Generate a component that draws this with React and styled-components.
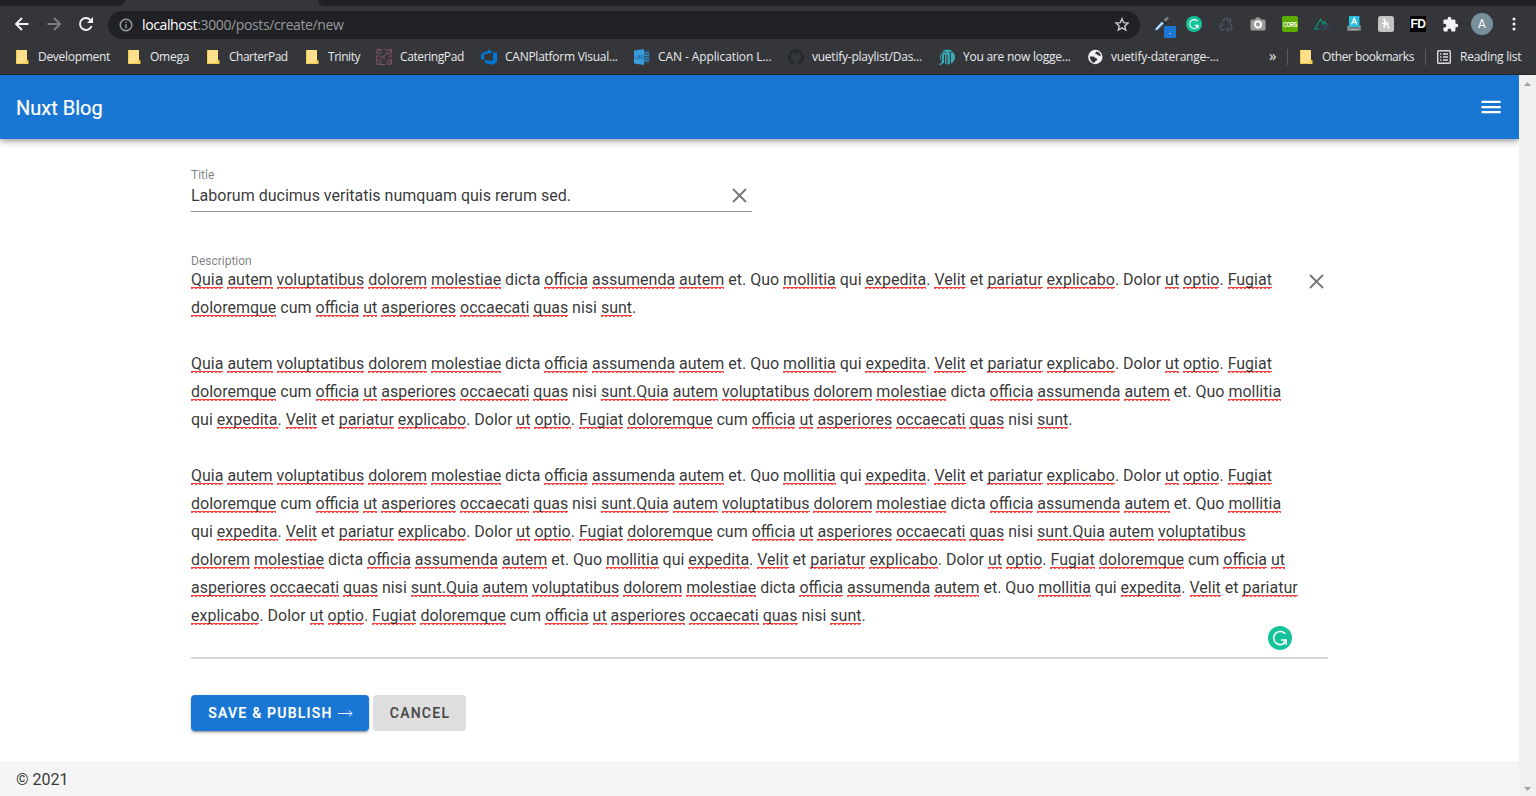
import React from "react";
import styled, { createGlobalStyle } from "styled-components";

const GlobalStyle = createGlobalStyle`
  * { box-sizing: border-box; }
  html, body { margin: 0; height: 100%; overflow: hidden; background: #fff; }
  body { font-family: Roboto, "Liberation Sans", sans-serif; color: rgba(0, 0, 0, 0.8); }
  svg { display: block; flex: none; }
`;

const Window = styled.div`
  width: 1536px;
  height: 796px;
  display: flex;
  flex-direction: column;
`;

const Chrome = styled.header`
  height: 75px;
  flex: none;
  background: #35363a;
  border-bottom: 1px solid #28292c;
  font-family: "Open Sans", "Noto Sans", sans-serif;
  color: #e8eaed;
`;

const TabStrip = styled.div`
  height: 6px;
  display: flex;
  justify-content: space-between;
`;

const InactiveTabs = styled.div`
  width: ${(p) => p.$width}px;
  background: #202124;
  border-radius: ${(p) => (p.$side === "left" ? "0 0 7px 0" : "0 0 0 7px")};
`;

const Toolbar = styled.div`
  height: 36px;
  display: flex;
  align-items: center;
  padding-left: 6px;
`;

const ToolButton = styled.div`
  width: 32px;
  height: 32px;
  flex: none;
  display: flex;
  align-items: center;
  justify-content: center;
  position: relative;
`;

const AddressBar = styled.div`
  width: 1032px;
  height: 28px;
  margin: 1px 6px 0 6px;
  border-radius: 14px;
  background: #202124;
  display: flex;
  align-items: center;
  padding: 0 10px 0 11px;
`;

const Url = styled.div`
  flex: 1;
  margin-left: 9px;
  font-size: 14px;
  letter-spacing: -0.38px;
  color: #96999d;
  white-space: nowrap;
  span { color: #fff; }
`;

const PenBadge = styled.div`
  position: absolute;
  left: 18px;
  top: 18px;
  width: 12px;
  height: 12px;
  border-radius: 1px;
  background: #1976d2;
  color: #fff;
  font-size: 9px;
  line-height: 9px;
  text-align: center;
`;

const Tile = styled.div`
  width: 16px;
  height: 16px;
  border-radius: ${(p) => p.$radius ?? 2}px;
  background: ${(p) => p.$bg};
  color: #fff;
  font: ${(p) => p.$font};
  letter-spacing: ${(p) => p.$spacing ?? 0}px;
  display: flex;
  align-items: center;
  justify-content: center;
  span { transform: scaleY(${(p) => p.$stretch ?? 1}); }
`;

const Avatar = styled.div`
  width: 22px;
  height: 22px;
  border-radius: 50%;
  background: #78909c;
  color: #fff;
  font: 12px/22px Roboto, sans-serif;
  text-align: center;
`;

const Bookmarks = styled.nav`
  height: 30px;
  display: flex;
  align-items: center;
  padding: 0 0 1px 14px;
  font-size: 12px;
  white-space: nowrap;
`;

const Bookmark = styled.div`
  width: ${(p) => p.$width}px;
  flex: none;
  display: flex;
  align-items: center;
  gap: 8px;
  letter-spacing: ${(p) => p.$spacing ?? 0}px;
`;

const Chevrons = styled.div`
  width: 18px;
  font-size: 15px;
  line-height: 12px;
  padding-bottom: 3px;
`;

const Divider = styled.div`
  width: 1px;
  height: 16px;
  margin-right: ${(p) => p.$gap}px;
  background: #5b5c60;
`;

const Viewport = styled.div`
  flex: 1;
  display: flex;
  min-height: 0;
`;

const Page = styled.div`
  width: 1519px;
  display: flex;
  flex-direction: column;
`;

const AppBar = styled.div`
  height: 64px;
  flex: none;
  background: #1976d2;
  color: #fff;
  display: flex;
  align-items: center;
  justify-content: space-between;
  padding: 0 16px;
  font-size: 20px;
  box-shadow: 0 2px 4px -1px rgba(0, 0, 0, 0.2), 0 4px 5px 0 rgba(0, 0, 0, 0.14), 0 1px 10px 0 rgba(0, 0, 0, 0.12);
`;

const Brand = styled.div`
  padding-top: 1px;
  -webkit-text-stroke: 0.2px #fff;
`;

const Form = styled.main`
  flex: 1;
  padding: 29px 191px 0 191px;
`;

const Label = styled.div`
  height: 14px;
  font-size: 12px;
  line-height: 14px;
  color: rgba(0, 0, 0, 0.52);
`;

const TitleField = styled.div`
  width: 561px;
  height: 44px;
  border-bottom: 1px solid #949494;
`;

const TitleRow = styled.div`
  height: 26px;
  display: flex;
  align-items: center;
  justify-content: space-between;
  padding-right: 5px;
  font-size: 16px;
`;

const DescriptionField = styled.div`
  position: relative;
  margin-top: 42px;
  height: 405px;
  border-bottom: 2px solid #d6d6d6;
`;

const DescriptionRow = styled.div`
  display: flex;
  justify-content: space-between;
  padding-right: 4px;
`;

const Paragraphs = styled.div`
  margin-top: -2px;
  font-size: 16px;
  line-height: 28px;
  word-spacing: -0.03px;
`;

const Line = styled.div`
  height: 28px;
  white-space: nowrap;
`;

const Misspelled = styled.span`
  background:
    linear-gradient(#f4433e, #f4433e) 0 17px / 100% 1px no-repeat,
    repeating-linear-gradient(90deg, rgba(255, 40, 40, 0.8) 0 2px, rgba(255, 40, 40, 0.1) 2px 4px) 0 18px / 100% 1px no-repeat;
`;

const Clear = styled.div`
  padding-top: ${(p) => p.$top ?? 0}px;
`;

const GrammarBadge = styled.div`
  position: absolute;
  right: 36px;
  bottom: 7px;
`;

const Actions = styled.div`
  display: flex;
  gap: 4px;
  margin-top: 36px;
`;

const Button = styled.button`
  width: ${(p) => p.$width}px;
  height: 36px;
  padding: 0 0 0 1px;
  border: 0;
  border-radius: 4px;
  background: ${(p) => (p.$primary ? "#1976d2" : "#dedede")};
  color: ${(p) => (p.$primary ? "#fff" : "rgba(0, 0, 0, 0.67)")};
  box-shadow: ${(p) => (p.$primary ? "0 3px 1px -2px rgba(0,0,0,.2), 0 2px 2px 0 rgba(0,0,0,.14), 0 1px 5px 0 rgba(0,0,0,.12)" : "none")};
  font: 500 14px Roboto, sans-serif;
  letter-spacing: 1.25px;
  -webkit-text-stroke: 0.2px currentColor;
  display: flex;
  align-items: center;
  justify-content: center;
  gap: 5px;
`;

const Footer = styled.footer`
  height: 35px;
  flex: none;
  background: #f5f5f5;
  padding: 7px 16px 0;
  font-size: 16px;
  line-height: 24px;
`;

const Scrollbar = styled.div`
  width: 17px;
  background: #f1f1f1;
  display: flex;
  flex-direction: column;
  align-items: center;
  justify-content: space-between;
  padding: 7px 0 5px;
`;

const Folder = () => (
  <svg width="16" height="16" viewBox="0 0 16 16">
    <path d="M2 1h11v10l1.300 1v3H2z" fill="#ffe08a" />
    <path d="M2.500 1v13.500h9" stroke="#f3c84f" fill="none" />
    <path d="M11.800 14.600v-3.200l1-1 1.600 1.200v3z" fill="#f3c645" />
  </svg>
);

const Circuit = () => (
  <svg width="16" height="16" viewBox="0 0 16 16" fill="none" stroke="#8a5464" strokeWidth=".9">
    <rect x=".5" y=".5" width="15" height="15" strokeDasharray="6 2 2 2" />
    <circle cx="3" cy="3" r="2" /><circle cx="13" cy="3" r="2" />
    <circle cx="3" cy="13" r="2" /><circle cx="13" cy="13" r="2" />
    <path d="M5 11V8l3-1 3-3M8 7v4M1 7h3M12 8h3" />
  </svg>
);

const DevOps = () => (
  <svg width="16" height="16" viewBox="0 0 16 16" fill="#0078d7">
    <path d="M0 6 1.500 4.100 7 1.900V0l5 3.600-9 1.800v5.500L0 10zM16 3.200v9.500l-4 3.300-6-2v2L3 11l9 1.100V3.600z" />
  </svg>
);

const ServerLog = () => (
  <svg width="16" height="16" viewBox="0 0 16 16">
    <path d="M9 1.500h6.500v12.500H9z" fill="#2b5877" />
    <path d="M10 4h5M10 6.500h5M10 9h5M10 11.500h5" stroke="#3f9bd6" strokeWidth=".8" />
    <path d="M0 1.500 10 0v16L0 14.500z" fill="#3a9bdc" />
    <path d="M1 6.500v3h1.600M4 6.500h1.500v3H4zM9 6.500H7v3h2V8" fill="none" stroke="#236a9c" strokeWidth=".8" />
  </svg>
);

const GitHub = () => (
  <svg width="16" height="16" viewBox="0 0 16 16" fill="#24292e">
    <path d="M8 0C3.580 0 0 3.580 0 8c0 3.540 2.290 6.530 5.470 7.590.4.070.550-.170.550-.380 0-.190-.010-.820-.010-1.490-2.010.370-2.530-.490-2.690-.940-.090-.230-.480-.940-.820-1.130-.280-.150-.680-.520-.010-.530.630-.010 1.080.580 1.230.820.720 1.210 1.870.870 2.330.660.070-.520.280-.870.510-1.070-1.780-.2-3.640-.890-3.640-3.950 0-.870.310-1.590.820-2.150-.080-.2-.360-1.020.080-2.120 0 0 .670-.210 2.200.820A7.700 7.700 0 0 1 8 3.860c.680 0 1.360.090 2 .270 1.530-1.040 2.200-.820 2.200-.820.440 1.100.160 1.920.080 2.120.510.560.820 1.270.820 2.150 0 3.070-1.870 3.750-3.650 3.950.290.250.540.730.540 1.480 0 1.070-.010 1.930-.010 2.200 0 .210.150.460.550.380A8 8 0 0 0 16 8c0-4.420-3.580-8-8-8z" />
  </svg>
);

const TealLogo = () => (
  <svg width="16" height="16" viewBox="0 0 16 16">
    <circle cx="8.500" cy="8" r="7.500" fill="#39aeb8" />
    <path d="M2.800 3.500V12M5.500 5.500V16M8 5.500V16M11.300 3.800V15" stroke="#35363a" strokeWidth="1.100" />
    <path d="M3 3.200h5M9.500 3.200H15" stroke="#35363a" strokeWidth=".7" />
    <path d="M4.200 5v8L.8 15.800" fill="none" stroke="#39aeb8" strokeWidth="1.500" />
  </svg>
);

const Globe = () => (
  <svg width="16" height="16" viewBox="0 0 16 16">
    <circle cx="8.300" cy="8" r="7.200" fill="#f1f3f4" />
    <path d="M2.800 7.500h3.400c1.600 0 1.800 1.900 3.400 1.900.9 0 1 .9.500 1.700-.6 1-1.300.6-2 1.300-.5.500-.2 1.200-1 1.300C5 13.500 3 11 2.800 7.500zM9.500 2.500 8.400 4c-.4.700.3 1.500 1.200 1.300.8-.2.800 1.200 1.800 1.200 1.300 0 1.400.8 2.500.8-.3-2.500-2-4.500-4.400-4.800z" fill="#35363a" />
  </svg>
);

const ReadingList = () => (
  <svg width="16" height="16" viewBox="0 0 16 16" fill="none" stroke="#dadce0">
    <rect x="1.700" y="1.700" width="12.600" height="12.600" rx="1" strokeWidth="1.400" />
    <path d="M4 5h1.500M4 8h1.500M4 11h1.500M7 5h5M7 8h5M7 11h5" strokeWidth="1.300" />
  </svg>
);

const Grammar = ({ size }) => (
  <svg width={size} height={size} viewBox="0 0 24 24" fill="none">
    <circle cx="12" cy="12" r="12" fill="#15c39a" />
    <path d="M17.300 7.800A6.600 6.600 0 1 0 16.800 16.800" stroke="#fff" strokeWidth="1.600" />
    <path d="M13.200 14h5v4.800M18 14.200l-2.800 2.800" stroke="#fff" strokeWidth="1.600" />
  </svg>
);

const Cross = () => (
  <svg width="15" height="15" viewBox="0 0 15 15" stroke="#757575" strokeWidth="1.800">
    <path d="M1 1l13 13M14 1 1 14" />
  </svg>
);

const BOOKMARKS = [
  ["Development", Folder, 112, -0.3],
  ["Omega", Folder, 79, -0.25],
  ["CharterPad", Folder, 99, -0.5],
  ["Trinity", Folder, 72, -0.45],
  ["CateringPad", Circuit, 105, -0.4],
  ["CANPlatform Visual...", DevOps, 153, -0.26],
  ["CAN - Application L...", ServerLog, 154, -0.1],
  ["vuetify-playlist/Das...", GitHub, 151, -0.24],
  ["You are now logge...", TealLogo, 148, -0.24],
  ["vuetify-daterange-...", Globe, 182, -0.2],
];

const P = "Quia autem voluptatibus dolorem molestiae dicta officia assumenda autem et. Quo mollitia qui expedita. Velit et pariatur explicabo. Dolor ut optio. Fugiat";
const LINES = [
  P,
  "doloremque cum officia ut asperiores occaecati quas nisi sunt.",
  "",
  P,
  "doloremque cum officia ut asperiores occaecati quas nisi sunt.Quia autem voluptatibus dolorem molestiae dicta officia assumenda autem et. Quo mollitia",
  "qui expedita. Velit et pariatur explicabo. Dolor ut optio. Fugiat doloremque cum officia ut asperiores occaecati quas nisi sunt.",
  "",
  P,
  "doloremque cum officia ut asperiores occaecati quas nisi sunt.Quia autem voluptatibus dolorem molestiae dicta officia assumenda autem et. Quo mollitia",
  "qui expedita. Velit et pariatur explicabo. Dolor ut optio. Fugiat doloremque cum officia ut asperiores occaecati quas nisi sunt.Quia autem voluptatibus",
  "dolorem molestiae dicta officia assumenda autem et. Quo mollitia qui expedita. Velit et pariatur explicabo. Dolor ut optio. Fugiat doloremque cum officia ut",
  "asperiores occaecati quas nisi sunt.Quia autem voluptatibus dolorem molestiae dicta officia assumenda autem et. Quo mollitia qui expedita. Velit et pariatur",
  "explicabo. Dolor ut optio. Fugiat doloremque cum officia ut asperiores occaecati quas nisi sunt.",
];

const KNOWN = new Set(["dicta", "et", "Quo", "qui", "Dolor", "cum", "nisi"]);

const checkSpelling = (line) =>
  line.split(/([A-Za-z]+(?:\.[A-Za-z]+)?)/).map((part, i) =>
    i % 2 === 1 && !KNOWN.has(part) ? <Misspelled key={i}>{part}</Misspelled> : part
  );

export default function App() {
  return (
    <Window>
      <GlobalStyle />
      <Chrome>
        <TabStrip>
          <InactiveTabs $width={125} $side="left" />
          <InactiveTabs $width={1218} $side="right" />
        </TabStrip>
        <Toolbar>
          <ToolButton>
            <svg width="16" height="16" viewBox="0 0 16 16" fill="none" stroke="#f1f3f4" strokeWidth="1.900"><path d="M14.500 8H2.500M8 2 2 8l6 6" /></svg>
          </ToolButton>
          <ToolButton>
            <svg width="16" height="16" viewBox="0 0 16 16" fill="none" stroke="#7d7e82" strokeWidth="1.900"><path d="M1.500 8h12M8 2l6 6-6 6" /></svg>
          </ToolButton>
          <ToolButton>
            <svg width="16" height="16" viewBox="0 0 16 16" fill="none" stroke="#f1f3f4" strokeWidth="1.900"><path d="M13.600 10A6 6 0 1 1 12.300 3.800L13.500 5" /><path d="M15 1v6H9z" fill="#f1f3f4" stroke="none" /></svg>
          </ToolButton>
          <AddressBar>
            <svg width="14" height="14" viewBox="0 0 14 14" fill="none" stroke="#9aa0a6" strokeWidth="1.400"><circle cx="7" cy="7" r="5.800" /><path d="M7 6.200V10.200M7 3.700v1.400" /></svg>
            <Url><span>localhost</span>:3000/posts/create/new</Url>
            <svg width="16" height="16" viewBox="0 0 16 16" fill="none" stroke="#c8cacd" strokeWidth="1.400"><path d="M8 1.700 9.700 5.700l4.300.4-3.200 2.800.9 4.200L8 10.900l-3.700 2.200.9-4.200L2 6.100l4.300-.4z" /></svg>
          </AddressBar>
          <ToolButton>
            <svg width="16" height="16" viewBox="0 0 16 16"><path d="M1 15 2 12 8 5.500l2.500 2L4 13.800z" fill="#4a9be0" /><path d="M2 13.500 8.500 6.500" stroke="#e3edf7" strokeWidth="1.500" /><path d="m9.500 6 4.500-4.500" stroke="#77787b" strokeWidth="3" /><path d="M8 4l4 3.500" stroke="#222" strokeWidth="1.500" /></svg>
            <PenBadge>.</PenBadge>
          </ToolButton>
          <ToolButton><Grammar size={16} /></ToolButton>
          <ToolButton>
            <svg width="16" height="16" viewBox="0 0 16 16" fill="none" stroke="#4c535e" strokeWidth="1.700"><path d="M5 5.500 7 2h2l1.500 2.500M12 7l2.500 4.500-1 2H9.500M6.500 13.500h-4l-1-2L3.500 8" strokeDasharray="4 1.200" /><path d="M12.500 2.500V5.500H9.500M11 11.500l-2 2 2 2M1.500 8.300l2.500-.8.800 2.500" /></svg>
          </ToolButton>
          <ToolButton>
            <svg width="16" height="16" viewBox="0 0 16 16"><path d="M2 3.500h3l1-2h4l1 2h3A1.500 1.500 0 0 1 15.500 5v8a1.500 1.500 0 0 1-1.500 1.500H2A1.500 1.500 0 0 1 .5 13V5A1.500 1.500 0 0 1 2 3.500z" fill="#9b9b9b" /><circle cx="8" cy="8.500" r="3.100" fill="none" stroke="#fff" strokeWidth="1.900" /></svg>
          </ToolButton>
          <ToolButton><Tile $bg="#5cab00" $font='700 5.500px "Liberation Sans", sans-serif' $spacing={-0.5} $stretch={1.35}><span>CORS</span></Tile></ToolButton>
          <ToolButton>
            <svg width="16" height="16" viewBox="0 0 16 16" fill="none" strokeWidth="1.200"><path d="m5.500 13 5-7.500 4.500 7.500z" stroke="#2f495e" /><path d="M6.500 3.500 11.500 13" stroke="#2b6070" /><path d="M5 13H.8L6.500 3.200 9 7.500l1.500-2L13 9" stroke="#079c75" /></svg>
          </ToolButton>
          <ToolButton>
            <svg width="16" height="16" viewBox="0 0 16 16"><path d="M1 9.500h14V15H1z" fill="#737679" /><path d="M2 12h1.500M12.500 12H14M4 13.500h8" stroke="#b8babc" /><path d="M3 0h10.500v11H3z" fill="#26bfe0" /><path d="M5.500 8.500 8.200 2l2.700 6.500M6.500 6.400h3.400" fill="none" stroke="#fff" strokeWidth="1.200" /></svg>
          </ToolButton>
          <ToolButton>
            <svg width="16" height="16" viewBox="0 0 16 16"><rect width="16" height="16" rx="2.500" fill="#c3c3c3" /><path d="M6 12.500c.3-3.500.8-6 .8-8.500 0-1-1-1-1.800-.2M4 7.600c2.500-.4 4.500-1 6.500-1M6.500 9.500C8.500 7.300 10.300 7.500 9.800 9.500c-.4 1.700-.2 3 1.800 1.800" fill="none" stroke="#fff" strokeWidth="1.300" /></svg>
          </ToolButton>
          <ToolButton><Tile $bg="#000" $radius={0} $font='700 12px "Liberation Sans", sans-serif' $spacing={-0.5}><span>FD</span></Tile></ToolButton>
          <ToolButton>
            <svg width="17" height="17" viewBox="0 0 24 24" fill="#f1f3f4"><path d="M20.500 11H19V7c0-1.100-.9-2-2-2h-4V3.500a2.500 2.500 0 0 0-5 0V5H4c-1.100 0-2 .9-2 2v3.800h1.500a2.700 2.700 0 0 1 0 5.400H2V20c0 1.100.9 2 2 2h3.800v-1.500a2.700 2.700 0 0 1 5.400 0V22H17c1.100 0 2-.9 2-2v-4h1.500a2.500 2.500 0 0 0 0-5z" /></svg>
          </ToolButton>
          <ToolButton><Avatar>A</Avatar></ToolButton>
          <ToolButton>
            <svg width="4" height="14" viewBox="0 0 4 14" fill="#f1f3f4"><circle cx="2" cy="2" r="1.500" /><circle cx="2" cy="7" r="1.500" /><circle cx="2" cy="12" r="1.500" /></svg>
          </ToolButton>
        </Toolbar>
        <Bookmarks>
          {BOOKMARKS.map(([name, Icon, width, spacing]) => (
            <Bookmark key={name} $width={width} $spacing={spacing}><Icon />{name}</Bookmark>
          ))}
          <Chevrons>»</Chevrons>
          <Divider $gap={10} />
          <Bookmark $width={127} $spacing={-0.44}><Folder />Other bookmarks</Bookmark>
          <Divider $gap={10} />
          <Bookmark $width={90} $spacing={-0.25}><ReadingList />Reading list</Bookmark>
        </Bookmarks>
      </Chrome>
      <Viewport>
        <Page>
          <AppBar>
            <Brand>Nuxt Blog</Brand>
            <svg width="24" height="24" viewBox="0 0 24 24" fill="#fff"><path d="M2.500 5.800h19.200v2.300H2.500zM2.500 10.900h19.200v2.300H2.500zM2.500 15.900h19.200v2.300H2.500z" /></svg>
          </AppBar>
          <Form>
            <TitleField>
              <Label>Title</Label>
              <TitleRow>
                Laborum ducimus veritatis numquam quis rerum sed.
                <Clear><Cross /></Clear>
              </TitleRow>
            </TitleField>
            <DescriptionField>
              <Label>Description</Label>
              <DescriptionRow>
                <Paragraphs>
                  {LINES.map((line, i) => <Line key={i}>{checkSpelling(line)}</Line>)}
                </Paragraphs>
                <Clear $top={6}><Cross /></Clear>
              </DescriptionRow>
              <GrammarBadge><Grammar size={24} /></GrammarBadge>
            </DescriptionField>
            <Actions>
              <Button $primary $width={178}>
                SAVE &amp; PUBLISH
                <svg width="15" height="10" viewBox="0 0 15 10" fill="none" stroke="#fff"><path d="M0 5.500h14M11 2.500l3 3-3 3" /></svg>
              </Button>
              <Button $width={93}>CANCEL</Button>
            </Actions>
          </Form>
          <Footer>© 2021</Footer>
        </Page>
        <Scrollbar>
          <svg width="7" height="4" viewBox="0 0 7 4" fill="#a3a3a3"><path d="M0 4 3.500 0 7 4z" /></svg>
          <svg width="7" height="4" viewBox="0 0 7 4" fill="#a3a3a3"><path d="M0 0 3.500 4 7 0z" /></svg>
        </Scrollbar>
      </Viewport>
    </Window>
  );
}
